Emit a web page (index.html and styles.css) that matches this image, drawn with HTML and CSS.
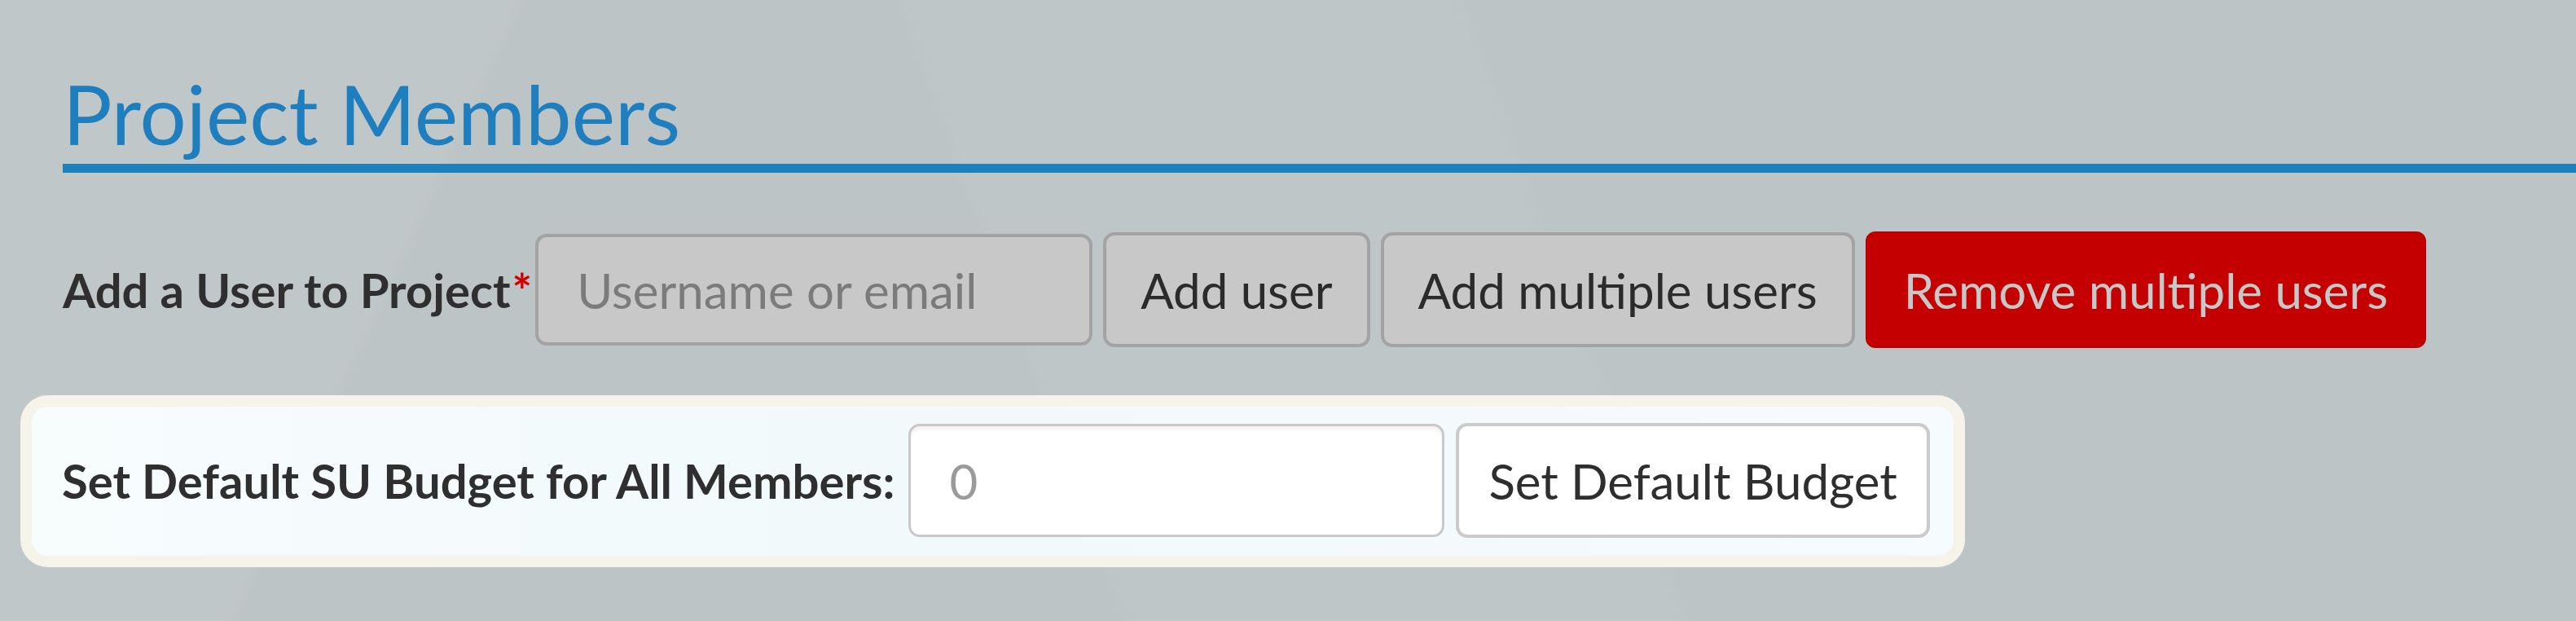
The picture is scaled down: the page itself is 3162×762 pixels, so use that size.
FILE: index.html
```html
<!DOCTYPE html>
<html lang="en">
<head>
<meta charset="utf-8">
<title>Project Members</title>
<link rel="stylesheet" href="styles.css">
</head>
<body>
<div class="section">
  <h2 class="title">Project Members</h2>
  <div class="add-row">
    <label class="lbl" for="user">Add a User to Project<span class="req">*</span></label>
    <input id="user" class="inp inp-user" type="text" placeholder="Username or email">
    <button class="btn btn-gray btn-add">Add user</button>
    <button class="btn btn-gray btn-multi">Add multiple users</button>
    <button class="btn btn-danger">Remove multiple users</button>
  </div>
  <div class="budget-box">
    <label class="lbl" for="budget">Set Default SU Budget for All Members:</label>
    <input id="budget" class="inp inp-budget" type="text" placeholder="0">
    <button class="btn btn-white">Set Default Budget</button>
  </div>
</div>
</body>
</html>
```
FILE: styles.css
```css
html, body {
  margin: 0;
  padding: 0;
}
body {
  width: 3162px;
  height: 762px;
  overflow: hidden;
  font-family: Lato, "Open Sans", sans-serif;
  background-color: #bdc4c5;
  background-image:
    linear-gradient(115deg, rgba(255,255,255,0.05) 0%, rgba(255,255,255,0.05) 18%, rgba(255,255,255,0) 18.4%),
    linear-gradient(70deg, rgba(255,255,255,0) 40%, rgba(255,255,255,0.03) 40.4%, rgba(255,255,255,0.03) 60%, rgba(255,255,255,0) 60.4%);
}
.section {
  padding-left: 77px;
}
.title {
  margin: 79px 0 0 0;
  padding: 0 0 2px 0;
  font-size: 101px;
  line-height: 120px;
  font-weight: 400;
  color: #1f7fbe;
  border-bottom: 11px solid #1e7fbd;
}
.add-row {
  display: flex;
  align-items: center;
  margin-top: 72px;
  height: 143px;
}
.lbl {
  font-size: 58px;
  font-weight: 700;
  color: #2f2f2f;
  white-space: nowrap;
}
.req {
  color: #d40000;
  margin-left: 2px;
}
.inp {
  box-sizing: border-box;
  font-family: inherit;
  font-size: 60px;
  outline: none;
  border-radius: 14px;
  padding: 0 0 0 47px;
}
.inp-user {
  width: 684px;
  height: 137px;
  margin-left: 4px;
  background: #c8c8c8;
  border: 4px solid #a3a3a3;
  color: #333;
}
.inp-user::placeholder {
  color: #7b7b7b;
}
.btn {
  box-sizing: border-box;
  font-family: inherit;
  font-size: 60px;
  border-radius: 14px;
  height: 141px;
  padding: 0 42px;
  margin-left: 13px;
  cursor: pointer;
  white-space: nowrap;
}
.btn-gray {
  background: #c8c8c8;
  border: 4px solid #a3a3a3;
  color: #2b2b2b;
}
.btn-danger {
  height: 143px;
  padding: 0 45px;
  background: #c40000;
  border: 2px solid #b80000;
  color: #c8c8c8;
  border-radius: 12px;
}
.budget-box {
  display: flex;
  align-items: center;
  width: max-content;
  margin: 58px 0 0 -52px;
  padding: 20px 29px 22px 37px;
  border: 14px solid #f6f3e9;
  border-radius: 34px;
  background: linear-gradient(90deg, #f7fcfd 0%, #f1f9fb 45%, #f6fbfd 100%);
}
.inp-budget {
  width: 658px;
  height: 139px;
  margin-left: 17px;
  background: #ffffff;
  border: 3px solid #c9c9c9;
  box-shadow: inset 0 4px 4px rgba(0,0,0,0.06);
  color: #333;
}
.inp-budget::placeholder {
  color: #9a9a9a;
}
.btn-white {
  margin-left: 14px;
  padding: 0 36px;
  background: #ffffff;
  border: 4px solid #cbcbcb;
  color: #2e2e2e;
}
```
